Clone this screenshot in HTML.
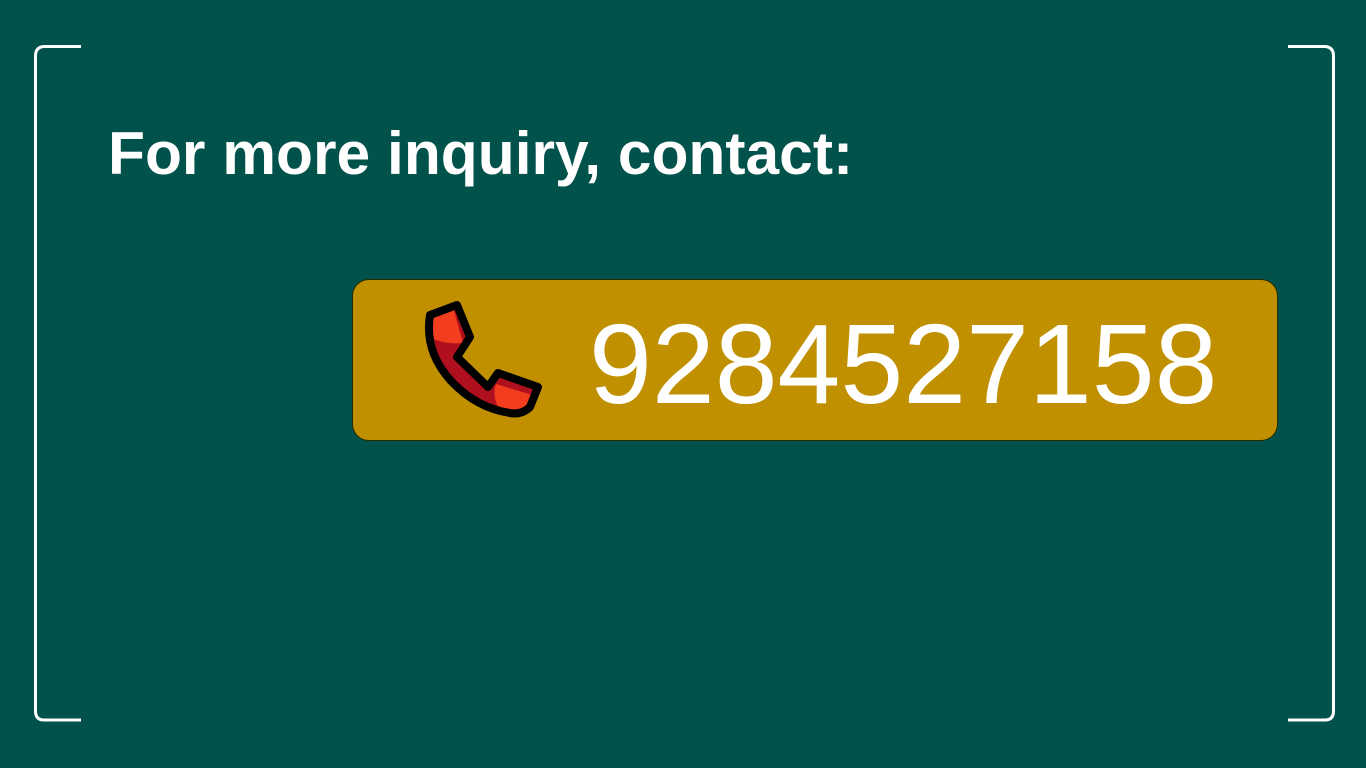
<!DOCTYPE html>
<html><head><style>
html,body{margin:0;padding:0}
body{width:1366px;height:768px;background:#00524b;position:relative;overflow:hidden;font-family:"Liberation Sans",sans-serif}
.h{position:absolute;left:108px;top:123px;font-size:60.5px;line-height:60px;font-weight:bold;color:#fff;white-space:nowrap}
.box{position:absolute;left:352px;top:279px;width:926px;height:162px;box-sizing:border-box;background:#c09000;border:1px solid #2a2a00;border-radius:17px}
.num{position:absolute;left:589px;top:308px;font-size:113px;line-height:113px;color:#fff;white-space:nowrap}
</style></head><body>
<svg width="1366" height="768" style="position:absolute;left:0;top:0">
<path d="M81,46.5 L44,46.5 Q35.5,47 35.5,56 L35.5,711 Q35.5,720 44,720 L81,720" fill="none" stroke="#fff" stroke-width="3"/>
<path d="M1288,46.5 L1325,46.5 Q1333.5,47 1333.5,56 L1333.5,711 Q1333.5,720 1325,720 L1288,720" fill="none" stroke="#fff" stroke-width="3"/>
</svg>
<div class="h">For more inquiry, contact:</div>
<div class="box"></div>
<svg width="130" height="130" style="position:absolute;left:418px;top:296px" viewBox="-4 -4 130 130">
<defs><clipPath id="c"><path d="M8,15 L35,5 L48,37 L35,57 L66,87 L76,73 L116,87 L108,107 Q100,115 88,113 Q55,108 30,82 Q2,52 8,15 Z"/></clipPath></defs>
<path d="M8,15 L35,5 L48,37 L35,57 L66,87 L76,73 L116,87 L108,107 Q100,115 88,113 Q55,108 30,82 Q2,52 8,15 Z" fill="#b0101e"/>
<g clip-path="url(#c)" fill="#f23d1f">
<path d="M0,0 L29,0 L41,43 Q20,45 4,35 Z"/>
<path d="M74,84 L120,98 L120,120 L85,120 Q68,100 74,84 Z"/>
</g>
<path d="M8,15 L35,5 L48,37 L35,57 L66,87 L76,73 L116,87 L108,107 Q100,115 88,113 Q55,108 30,82 Q2,52 8,15 Z" fill="none" stroke="#000" stroke-width="8" stroke-linejoin="round"/>
</svg>
<div class="num">9284527158</div>
</body></html>
